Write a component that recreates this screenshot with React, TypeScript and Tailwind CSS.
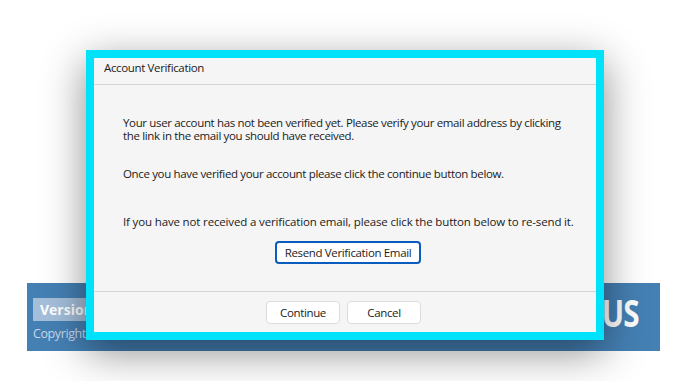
import React from "react"

const App = () => {
  const font = { fontFamily: '"Open Sans", "Liberation Sans", sans-serif' }
  return (
    <div className="relative w-[683px] h-[381px] bg-white overflow-hidden" style={font}>
      {/* page footer behind the modal */}
      <div className="absolute left-[27px] top-[283px] w-[633px] h-[68px] bg-[#4580b4] flex justify-between">
        <div className="flex flex-col pl-[6px] pt-[15px]">
          <div className="w-[60px] h-[23px] bg-[#a5bfdb] text-white font-bold text-[14px] leading-[23px] pl-[7px]">Version</div>
          <div className="text-[#c8d8ea] text-[12.5px] mt-[4px] tracking-[-0.4px]">Copyright ©</div>
        </div>
        <div className="text-white font-bold text-[37px] leading-none pr-[27px] pt-[11px] tracking-[-1px] scale-x-[0.8] origin-right">US</div>
      </div>

      {/* modal */}
      <div className="absolute left-[86px] top-[50px] w-[518px] h-[290px] border-[8px] border-[#00e1fa] bg-[#f5f5f5] shadow-[0_12px_40px_rgba(0,0,0,0.45)] flex flex-col text-[#1b1b1b]">
        <div className="h-[27px] border-b border-[#d4d4d4] flex items-start pt-[1px] pl-[10px] text-[11.5px] tracking-[-0.35px]">Account Verification</div>
        <div className="flex-1 flex flex-col pl-[29px] pr-[20px] text-[11.5px] leading-[13px] tracking-[-0.35px]">
          <p className="mt-[31px] w-[450px]">Your user account has not been verified yet. Please verify your email address by clicking the link in the email you should have received.</p>
          <p className="mt-[25px]">Once you have verified your account please click the continue button below.</p>
          <p className="mt-[35px] tracking-[-0.15px]">If you have not received a verification email, please click the button below to re-send it.</p>
          <div className="flex justify-center mt-[13px] -ml-[23px] -mr-[20px]">
            <button className="w-[146px] h-[23px] bg-white border-2 border-[#0b5cbf] rounded-[4px] text-[11.5px] tracking-[-0.35px] text-[#1b1b1b]">Resend Verification Email</button>
          </div>
        </div>
        <div className="h-[41px] border-t border-[#d4d4d4] flex justify-center items-start pt-[9px] gap-[7px] pr-[3px]">
          <button className="w-[74px] h-[23px] bg-white border border-[#dcdcdc] rounded-[4px] text-[11.5px] tracking-[-0.35px]">Continue</button>
          <button className="w-[74px] h-[23px] bg-white border border-[#dcdcdc] rounded-[4px] text-[11.5px] tracking-[-0.35px]">Cancel</button>
        </div>
      </div>
    </div>
  )
}

export default App
